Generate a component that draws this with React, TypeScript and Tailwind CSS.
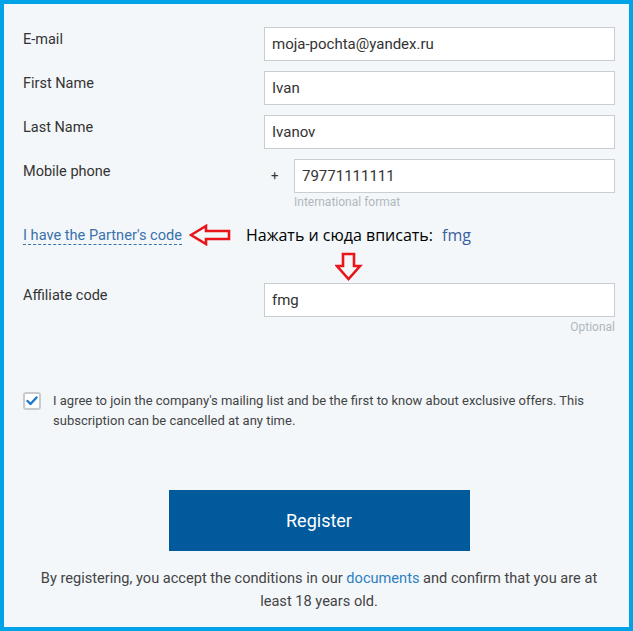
import React from "react";

const font = { fontFamily: "Roboto, 'Liberation Sans', sans-serif" };

function Row({ label, value }: { label: string; value: string }) {
  return (
    <div className="flex items-start">
      <div className="w-[241px] pt-[3px] text-[14.5px] leading-[20px] text-[#333]">{label}</div>
      <div className="w-[351px] h-[34px] bg-white border border-[#c9ced3] flex items-center px-[7px] text-[15px] text-[#333]">
        {value}
      </div>
    </div>
  );
}

export default function App() {
  return (
    <div className="w-[633px] h-[631px] border-4 border-[#00a3e8] bg-[#f3f7fa] relative" style={font}>
      <div className="pl-[19px] pt-[23px] flex flex-col">
        <div className="flex flex-col gap-[10px]">
          <Row label="E-mail" value="moja-pochta@yandex.ru" />
          <Row label="First Name" value="Ivan" />
          <Row label="Last Name" value="Ivanov" />
          <div className="flex items-start">
            <div className="w-[241px] pt-[3px] text-[14.5px] leading-[20px] text-[#333]">Mobile phone</div>
            <div className="w-[30px] h-[34px] flex items-center pl-[7px] text-[13px] text-[#333]">+</div>
            <div className="flex flex-col">
              <div className="w-[321px] h-[34px] bg-white border border-[#c9ced3] flex items-center px-[7px] text-[15px] text-[#333]">
                79771111111
              </div>
              <div className="text-[12px] leading-[16px] text-[#b0b7be] pt-[1px]">International format</div>
            </div>
          </div>
        </div>

        <div className="flex items-center h-[30px] mt-[10px]">
          <span className="text-[14.6px] text-[#3a72ab] border-b border-dashed border-[#3a72ab] leading-[18px]">
            I have the Partner's code
          </span>
          <svg width="44" height="22" viewBox="0 0 44 22" className="ml-[7px]">
            <path d="M2 11 L17 2 L17 7 L40 7 L40 15 L17 15 L17 20 Z" fill="none" stroke="#e8161b" strokeWidth="2.6" strokeLinejoin="miter" />
          </svg>
          <span className="ml-[13px] text-[16px] text-black" style={{ fontFamily: "'Open Sans', 'Noto Sans', sans-serif" }}>
            Нажать и сюда вписать:
          </span>
          <span className="ml-[9px] text-[16px] text-[#3a5fa0]" style={{ fontFamily: "'Open Sans', 'Noto Sans', sans-serif" }}>
            fmg
          </span>
        </div>
        <svg width="28" height="30" viewBox="0 0 28 30" className="absolute left-[331px] top-[248px]">
          <path d="M8 2 L19 2 L19 14 L25 14 L13.5 27 L2 14 L8 14 Z" fill="none" stroke="#e8161b" strokeWidth="2.6" />
        </svg>

        <div className="mt-[33px]">
          <Row label="Affiliate code" value="fmg" />
        </div>
        <div className="w-[592px] text-right text-[12px] leading-[16px] text-[#b0b7be] pt-[2px]">Optional</div>

        <div className="flex items-start mt-[56px]">
          <div className="w-[18px] h-[18px] mt-[1px] border-2 border-[#c6cbd0] rounded-[3px] bg-white flex items-center justify-center">
            <svg width="12" height="10" viewBox="0 0 12 10">
              <path d="M1.5 5 L4.5 8 L10.5 1.5" fill="none" stroke="#1a78cc" strokeWidth="2.4" strokeLinecap="round" strokeLinejoin="round" />
            </svg>
          </div>
          <div className="ml-[12px] w-[560px] text-[13px] leading-[20px] text-[#444]">
            I agree to join the company's mailing list and be the first to know about exclusive offers. This subscription can be cancelled at any time.
          </div>
        </div>

        <div className="flex justify-center mt-[59px] pr-[14px]">
          <div className="w-[301px] h-[61px] bg-[#005a9b] flex items-center justify-center text-white text-[18px]">
            Register
          </div>
        </div>
        <p className="text-center text-[14.6px] leading-[23px] text-[#444] mt-[16px] pl-[16px] pr-[30px]">
          By registering, you accept the conditions in our <span className="text-[#2d7fc1]">documents</span> and confirm that you are at least 18 years old.
        </p>
      </div>
    </div>
  );
}
